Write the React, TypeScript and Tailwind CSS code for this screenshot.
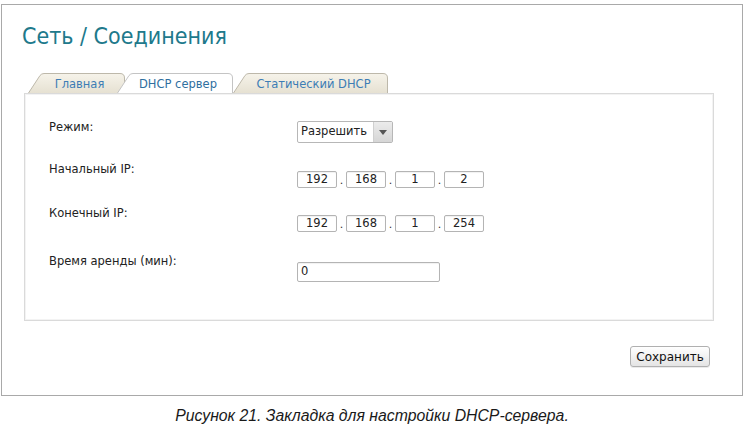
import React from "react";

const ui = "font-['DejaVu_Sans',Tahoma,sans-serif]";

function Tab({
  label,
  width,
  active = false,
  className = "",
}: {
  label: string;
  width: number;
  active?: boolean;
  className?: string;
}) {
  const w = width;
  const d = `M0.5,20 L12,2.5 Q13.5,0.5 16,0.5 L${w - 5},0.5 Q${w - 0.5},0.5 ${w - 0.5},5 L${w - 0.5},20`;
  return (
    <div
      className={`relative flex h-5 items-end justify-center pb-[2px] pl-[6px] ${active ? "z-10" : ""} ${className}`}
      style={{ width: w }}
    >
      <svg className="absolute inset-0" width={w} height={21} viewBox={`0 0 ${w} 21`}>
        <defs>
          <linearGradient id="tabbg" x1="0" y1="0" x2="0" y2="1">
            <stop offset="0" stopColor="#f6f3ea" />
            <stop offset="1" stopColor="#e6e1d2" />
          </linearGradient>
        </defs>
        <path d={d + " Z"} fill={active ? "#ffffff" : "url(#tabbg)"} stroke="none" />
        <path d={d} fill="none" stroke={active ? "#c4c4c4" : "#bdb8aa"} strokeWidth={1} />
      </svg>
      <span
        className={`relative text-[11.5px] leading-[14px] ${active ? "text-[#2f6f9f]" : "text-[#3d7db5]"}`}
      >
        {label}
      </span>
    </div>
  );
}

function IpField({ parts }: { parts: string[] }) {
  return (
    <div className="flex items-end">
      {parts.map((p, i) => (
        <div key={i} className="flex items-end">
          {i > 0 && (
            <span className="w-[9px] text-center text-[11px] leading-[14px] text-[#333]">.</span>
          )}
          <div className="flex h-[17px] w-10 items-center justify-center rounded-[2px] border border-[#b4b4b4] bg-white text-[11.5px] text-[#222] shadow-[inset_0_1px_1px_rgba(0,0,0,0.06)]">
            {p}
          </div>
        </div>
      ))}
    </div>
  );
}

export default function App() {
  return (
    <div className={`h-[437px] w-[744px] bg-white ${ui}`}>
      <div className="ml-px mt-[4px] h-[392px] w-[742px] border border-[#a9a9a9] pl-[22px] pr-[28px]">
        <h1 className="ml-[-2px] mt-[17px] font-['DejaVu_Sans_Condensed','DejaVu_Sans',sans-serif] text-[23px] leading-[28px] text-[#20798b] [font-stretch:semi-condensed]">
          Сеть / Соединения
        </h1>

        <div className="ml-[4px] mt-[23px] flex">
          <Tab label="Главная" width={97} />
          <Tab label="DHCP сервер" width={116} active className="ml-[-8px]" />
          <Tab label="Статический DHCP" width={155} />
        </div>

        <div className="flex h-[228px] flex-col border border-[#dadada] pl-[24px] pt-[26px] text-[11.5px] text-[#222] shadow-[inset_0_0_0_1px_#f3f3f3]">
          <div className="flex items-start">
            <span className="w-[248px] leading-[14px]">Режим:</span>
            <div className="mt-px flex h-[22px] w-[96px] items-stretch rounded-[2px] border border-[#b7b7b7] bg-white">
              <span className="flex flex-1 items-center pl-[3px] text-[11.5px]">Разрешить</span>
              <span className="flex w-[19px] items-center justify-center border-l border-[#d0d0d0] bg-gradient-to-b from-[#ececec] to-[#d6d6d6]">
                <svg width="8" height="5" viewBox="0 0 8 5">
                  <path d="M0 0 L8 0 L4 5 Z" fill="#555" />
                </svg>
              </span>
            </div>
          </div>

          <div className="mt-[19px] flex items-start">
            <span className="w-[248px] leading-[14px]">Начальный IP:</span>
            <div className="mt-[9px]">
              <IpField parts={["192", "168", "1", "2"]} />
            </div>
          </div>

          <div className="mt-[18px] flex items-start">
            <span className="w-[248px] leading-[14px]">Конечный IP:</span>
            <div className="mt-[9px]">
              <IpField parts={["192", "168", "1", "254"]} />
            </div>
          </div>

          <div className="mt-[22px] flex items-start">
            <span className="w-[248px] leading-[14px]">Время аренды (мин):</span>
            <div className="mt-[8px] flex h-[20px] w-[143px] items-center rounded-[2px] border border-[#b4b4b4] bg-white pl-[3px] text-[11.5px] shadow-[inset_0_1px_1px_rgba(0,0,0,0.06)]">
              0
            </div>
          </div>
        </div>

        <div className="mt-[25px] flex justify-end pr-[4px]">
          <button className="h-[21px] w-[80px] rounded-[3px] border border-[#b0b0b0] bg-gradient-to-b from-white to-[#e4e4e4] text-[12px] text-[#111] shadow-[0_1px_0_rgba(0,0,0,0.08)]">
            Сохранить
          </button>
        </div>
      </div>

      <p className="mt-[11px] text-center font-['Liberation_Sans',Arial,sans-serif] text-[15.8px] italic leading-[18px] text-[#1a1a1a]">
        Рисунок 21. Закладка для настройки DHCP-сервера.
      </p>
    </div>
  );
}
